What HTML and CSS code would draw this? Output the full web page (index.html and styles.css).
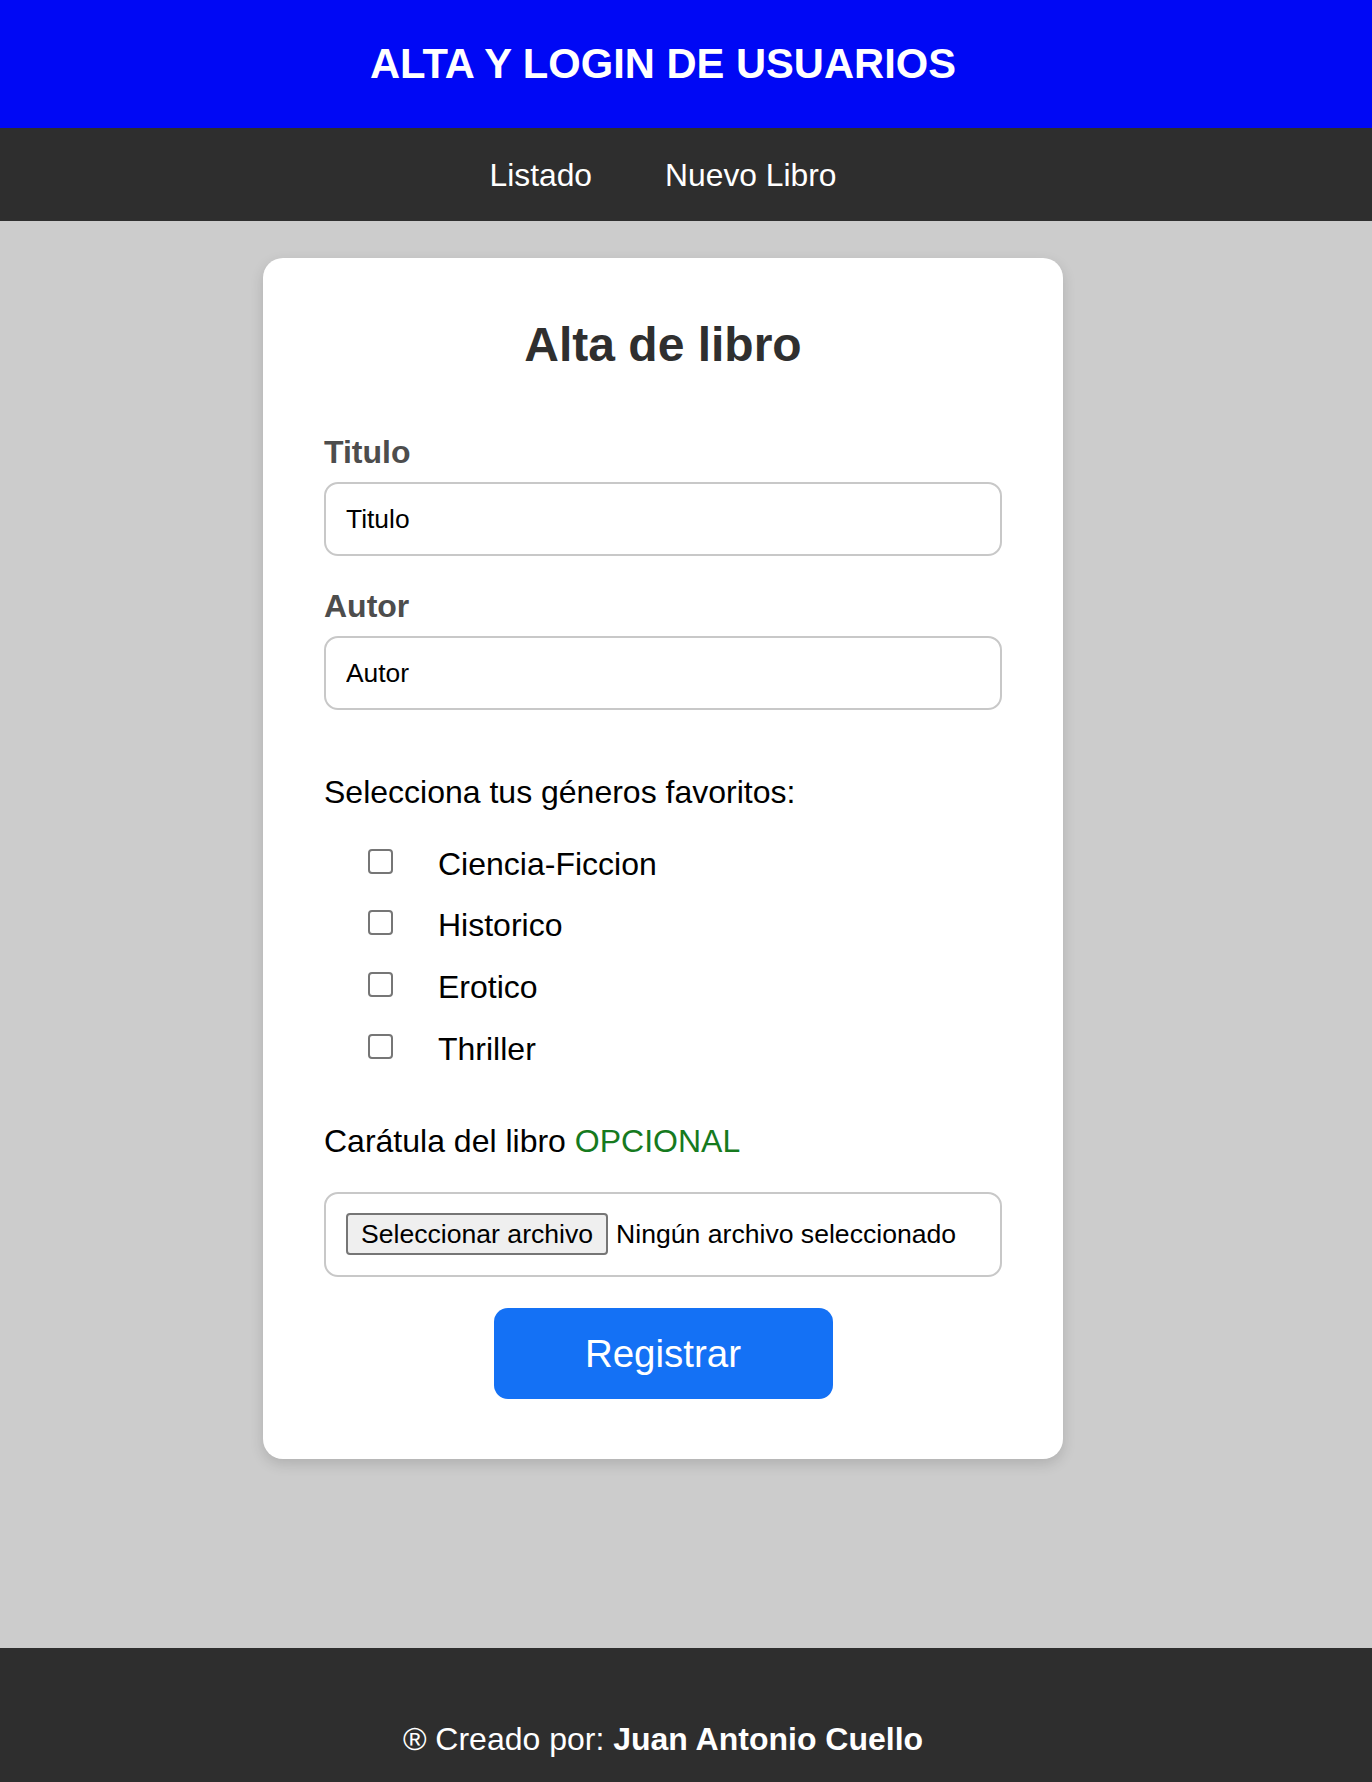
FILE: index.html
```html
<!DOCTYPE html>
<html lang="es">
<head>
<meta charset="utf-8">
<title>Alta de libro</title>
<link rel="stylesheet" href="styles.css">
</head>
<body>
<header class="site-header">
  <div class="wrap header-inner">
    <h1 class="site-title">ALTA Y LOGIN DE USUARIOS</h1>
  </div>
</header>
<nav class="site-nav">
  <div class="wrap nav-inner">
    <a class="nav-link" href="#">Listado</a>
    <a class="nav-link" href="#">Nuevo Libro</a>
  </div>
</nav>
<main class="main">
  <div class="wrap">
    <form class="card">
      <h2 class="card-title">Alta de libro</h2>
      <label class="field-label" for="titulo">Titulo</label>
      <input class="text-input" id="titulo" type="text" value="Titulo">
      <label class="field-label" for="autor">Autor</label>
      <input class="text-input" id="autor" type="text" value="Autor">

      <div class="generos">
        <p class="section-text">Selecciona tus géneros favoritos:</p>
        <div class="check-list">
          <label class="check-row"><input class="check" type="checkbox"><span>Ciencia-Ficcion</span></label>
          <label class="check-row"><input class="check" type="checkbox"><span>Historico</span></label>
          <label class="check-row"><input class="check" type="checkbox"><span>Erotico</span></label>
          <label class="check-row"><input class="check" type="checkbox"><span>Thriller</span></label>
        </div>
      </div>

      <p class="section-text caratula">Carátula del libro <span class="optional">OPCIONAL</span></p>
      <label class="file-box">
        <span class="file-btn">Seleccionar archivo</span>
        <span class="file-name">Ningún archivo seleccionado</span>
        <input class="file-input" type="file">
      </label>

      <div class="actions">
        <button class="btn" type="button">Registrar</button>
      </div>
    </form>
  </div>
</main>
<footer class="site-footer">
  <div class="wrap">
    <p class="footer-text">® Creado por: <strong>Juan Antonio Cuello</strong></p>
  </div>
</footer>
</body>
</html>
```
FILE: styles.css
```css
* {
  box-sizing: border-box;
}

html, body {
  margin: 0;
  padding: 0;
}

body {
  font-family: "Liberation Sans", Arial, Helvetica, sans-serif;
  background: #cccccc;
  color: #000;
  width: 1372px;
}

.wrap {
  width: 1326px;
}

/* Header */
.site-header {
  background: #0008f5;
}

.header-inner {
  height: 128px;
  display: flex;
  align-items: center;
  justify-content: center;
}

.site-title {
  margin: 0;
  color: #fff;
  font-size: 41.7px;
  font-weight: 700;
  line-height: 46px;
}

/* Nav */
.site-nav {
  background: #2e2e2e;
}

.nav-inner {
  height: 93px;
  display: flex;
  align-items: center;
  justify-content: center;
  gap: 73px;
}

.nav-link {
  color: #fff;
  text-decoration: none;
  font-size: 31.8px;
  line-height: 36px;
}

/* Main */
.main {
  padding: 37px 0 189px;
}

.card {
  width: 800px;
  margin: 0 auto;
  background: #fff;
  border-radius: 20px;
  padding: 60px 61px 60px;
  box-shadow: 0 5px 14px rgba(0, 0, 0, 0.14);
}

.card-title {
  margin: 0 0 62px;
  text-align: center;
  font-size: 48px;
  line-height: 54px;
  font-weight: 700;
  color: #2f2f2f;
}

.field-label {
  display: block;
  font-size: 32px;
  line-height: 36px;
  font-weight: 700;
  color: #4d4d4d;
  margin-bottom: 12px;
}

.text-input {
  display: block;
  width: 100%;
  height: 74px;
  margin: 0 0 32px;
  padding: 0 20px;
  border: 2px solid #c8c8c8;
  border-radius: 14px;
  font-family: inherit;
  font-size: 26.4px;
  color: #000;
  background: #fff;
  outline: none;
}

.generos {
  margin-top: 64px;
}

.section-text {
  margin: 0;
  font-size: 32px;
  line-height: 36px;
}

.check-list {
  margin-top: 35.6px;
  padding-left: 44px;
  display: flex;
  flex-direction: column;
  gap: 25.7px;
}

.check-row {
  display: flex;
  align-items: flex-start;
  font-size: 32px;
  line-height: 36px;
}

.check {
  appearance: none;
  -webkit-appearance: none;
  width: 25px;
  height: 25px;
  margin: 3px 45px 0 0;
  border: 2px solid #767676;
  border-radius: 4px;
  background: #fff;
  flex: none;
}

.caratula {
  margin-top: 56px;
}

.optional {
  color: #167a1e;
}

.file-box {
  margin-top: 33px;
  display: flex;
  align-items: center;
  width: 100%;
  height: 85px;
  padding: 0 20px;
  border: 2px solid #c8c8c8;
  border-radius: 14px;
  font-size: 26.6px;
}

.file-btn {
  display: flex;
  align-items: center;
  height: 42px;
  padding: 0 13px;
  border: 2px solid #767676;
  border-radius: 4px;
  background: #efefef;
  color: #000;
  white-space: nowrap;
}

.file-name {
  margin-left: 8px;
  white-space: nowrap;
}

.file-input {
  display: none;
}

.actions {
  margin-top: 31.6px;
  display: flex;
  justify-content: center;
}

.btn {
  width: 339px;
  height: 91px;
  border: none;
  border-radius: 14px;
  background: #1471f5;
  color: #fff;
  font-family: inherit;
  font-size: 38.5px;
  cursor: pointer;
}

/* Footer */
.site-footer {
  background: #2e2e2e;
  padding: 73px 0 73px;
}

.footer-text {
  margin: 0;
  text-align: center;
  color: #fff;
  font-size: 32px;
  line-height: 36px;
}

.footer-text strong {
  font-weight: 700;
}
```
